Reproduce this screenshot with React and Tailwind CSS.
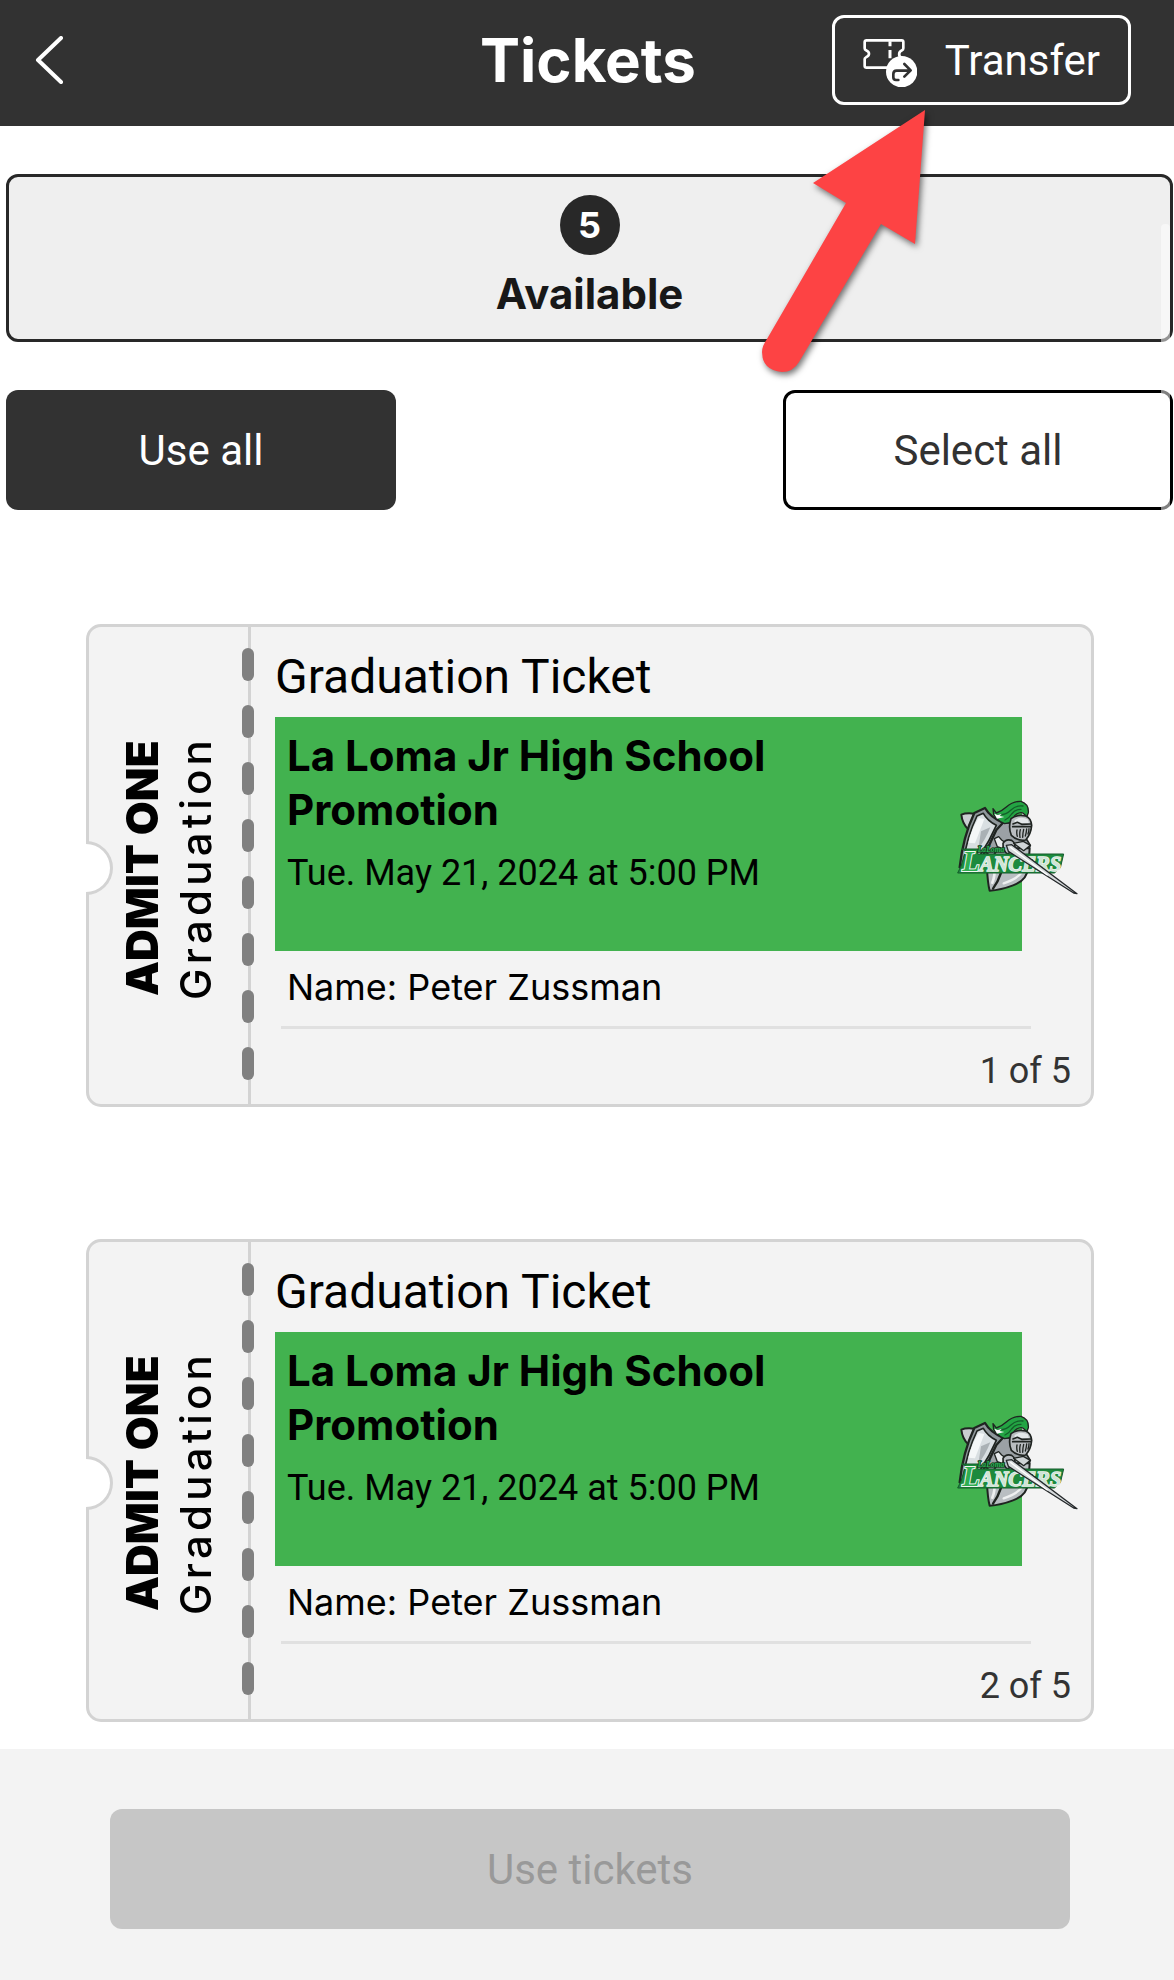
import React from 'react';

const tickets = [
  { id: 1, type: 'Graduation Ticket', event: 'La Loma Jr High School Promotion', date: 'Tue. May 21, 2024 at 5:00 PM', name: 'Peter Zussman' },
  { id: 2, type: 'Graduation Ticket', event: 'La Loma Jr High School Promotion', date: 'Tue. May 21, 2024 at 5:00 PM', name: 'Peter Zussman' },
];
const total = 5;
const dashes = [0, 1, 2, 3, 4, 5, 6, 7];

function TransferIcon(){
  return (
    <svg viewBox="132 69 162 162" className="w-[54px] h-[54px] shrink-0" fill="none" aria-hidden="true">
      <path d="M143 91H248Q253 91 253 96V115Q253 119 249 121C238 126 238 138 247 143L253 147V173H143Q137 173 137 168V147Q137 144 141 142C153 137 153 126 141 121Q137 119 137 115V96Q137 91 143 91Z" stroke="#fff" strokeWidth="8" strokeLinejoin="round" />
      <path d="M213 94V109M213 120V145" stroke="#fff" strokeWidth="9" />
      <circle cx="248" cy="185" r="47" fill="#fff" />
      <path d="M238 210H231Q223 210 223 202V192Q223 182 233 182H273M256 162L275 181L256 200" stroke="#323232" strokeWidth="8" strokeLinecap="round" strokeLinejoin="round" />
    </svg>
  );
}

function LancersLogo(){
  return (
    <svg viewBox="0 0 480 390" className="absolute right-0 top-[153px] w-[160px] h-[130px]" role="img" aria-label="La Loma Lancers">
      <g stroke="#1f2421" strokeLinejoin="round" strokeLinecap="round">
        {/* shoulder and body */}
        <path d="M130 101Q105 98 91 104Q94 132 112 148Z" fill="#c9ced1" strokeWidth="6" />
        <path d="M196 130L246 128L288 180L298 196L284 226L180 232L150 200Z" fill="#9ba1a5" strokeWidth="5" />
        <path d="M168 264Q170 310 176 332Q210 330 246 316Q288 302 292 262L296 205L200 205Z" fill="#b9bec2" strokeWidth="6" />
        <path d="M214 240Q218 280 186 326" fill="none" strokeWidth="7" />
        <path d="M282 258Q274 292 218 310" fill="none" stroke="#eef0f1" strokeWidth="7" />
        <path d="M190 262Q193 286 184 308" fill="none" stroke="#eef0f1" strokeWidth="8" />
        {/* shield */}
        <path d="M86 262Q96 170 130 99L162 84Q178 112 216 128L196 150Q178 194 150 236L100 250Z" fill="#8f979b" strokeWidth="7" />
        <path d="M99 238Q108 170 138 108L157 100Q169 122 196 136Q176 182 148 224Z" fill="#d9dfe2" strokeWidth="5" />
        <path d="M112 188Q122 146 143 114L160 117Q148 149 132 190Z" fill="#f4f7f8" stroke="none" />
        <path d="M150 154L178 142Q164 178 142 206Z" fill="#aab1b5" stroke="none" />
        {/* plume */}
        <path d="M186 86L196 99Q212 94 225 82Q246 63 270 64Q294 72 292 98L287 112Q277 90 257 102Q246 109 240 127L221 131Q200 123 188 104Z" fill="#23a443" strokeWidth="4" />
        <path d="M202 104Q224 106 240 90Q256 75 276 78M222 120Q234 115 242 102Q252 88 270 88" fill="none" stroke="#145e2a" strokeWidth="4" />
        <path d="M190 101L198 116L220 111L206 108L212 102L199 105Z" fill="#fff" stroke="none" />
        {/* helmet */}
        <path d="M240 116Q258 102 284 108Q300 114 302 136Q300 162 284 180Q260 184 241 166Q231 142 240 116Z" fill="#b9bdc0" strokeWidth="5" />
        <path d="M251 120Q270 108 290 118L294 130H250Z" fill="#e3e7e9" stroke="none" />
        <path d="M246 132L259 127L272 133L299 132M245 140H299" fill="none" strokeWidth="5" />
        <path d="M258 150Q256 159 259 169M268 149Q265 160 267 172M278 148Q275 160 275 172M287 147Q286 158 283 168M294 146Q294 153 291 162" fill="none" strokeWidth="4" />
        {/* gauntlet */}
        <path d="M190 176L203 170L212 180L222 187L215 206L199 200Z" fill="#e9eced" strokeWidth="4" />
        <path d="M216 190Q224 176 242 181Q256 190 250 208L230 222Q215 214 216 190Z" fill="#b9bec2" strokeWidth="5" />
        <path d="M248 190L277 184L298 196L278 212Z" fill="#d0d5d7" strokeWidth="4" />
      </g>
      <path d="M93 207H142L140 222H398L388 264L370 279H80L90 258L104 212Z" fill="#1c8a3d" stroke="#155a2b" strokeWidth="3" />
      <g fontFamily="'Liberation Serif', serif" fontWeight="700" fontStyle="italic">
        <text x="140" y="217" fontSize="23" fill="#2fb457" stroke="#123d20" strokeWidth="5" paintOrder="stroke">LaLoma</text>
        <text x="94" y="273" fontSize="86" fill="#2fae52" stroke="#f1f5f2" strokeWidth="6" paintOrder="stroke">L</text>
        <text x="146" y="273" fontSize="62" fill="#cfe5d5" stroke="#f1f5f2" strokeWidth="4" paintOrder="stroke">ANCERS</text>
      </g>
      {/* lance */}
      <path d="M226 196L242 194L438 341L428 339L232 214Z" fill="#d6dadc" stroke="#24282a" strokeWidth="4" strokeLinejoin="round" />
      <path d="M238 202L350 286" stroke="#fff" strokeWidth="4" />
    </svg>
  );
}

function Ticket({ ticket }){
  return (
    <article className="relative flex rounded-[15px] border-[3px] border-[#d3d3d3] bg-[#f3f3f3] text-black">
      <div className="relative flex w-[162px] shrink-0 items-center justify-center border-r-[3px] border-[#d3d3d3] pt-1">
        <div className="rotate-180 text-center font-['Inter'] leading-[54px] [writing-mode:vertical-rl]">
          <p className="text-[44px] font-black">ADMIT ONE</p>
          <p className="text-[42px] font-medium tracking-widest">Graduation</p>
        </div>
        <div className="absolute top-[21px] -right-[6px] flex flex-col gap-6">
          {dashes.map((d) => <span key={d} className="h-[33px] w-3 rounded-full bg-[#808080]" />)}
        </div>
      </div>
      {/* punched edge */}
      <span className="absolute top-[214px] -left-[3px] h-[54px] w-[27px] rounded-r-full border-[3px] border-l-0 border-[#d3d3d3] bg-white" />

      <div className="relative min-w-0 flex-1 pt-[22px] pb-[9px] pl-6">
        <h2 className="text-[48px] leading-[56px]">{ticket.type}</h2>
        <div className="mt-3 mr-[69px] bg-[#42b24f] px-3 pt-3 pb-[54px]">
          <h3 className="max-w-[560px] font-['Inter'] text-[42px] leading-[54px] font-bold">{ticket.event}</h3>
          <p className="mt-3 text-[36px] leading-[48px]">{ticket.date}</p>
        </div>
        <p className="mt-3 pl-3 font-['Inter'] text-[36px] leading-[48px]">Name: {ticket.name}</p>
        <hr className="mt-[15px] mr-[60px] ml-[6px] border-t-[3px] border-[#e0e0e0]" />
        <p className="mt-[18px] pr-5 text-right text-[36px] leading-[48px] text-[#333]">{ticket.id} of {total}</p>
        <LancersLogo />
      </div>
    </article>
  );
}

export default function App(){
  return (
    <div className="relative min-h-screen overflow-x-hidden bg-white font-['Roboto',sans-serif]">
      <header className="grid grid-cols-[1fr_auto_1fr] items-center bg-[#323232] pt-[15px] pb-[21px] pl-[2px] text-white">
        <button type="button" aria-label="Back" className="ml-8 justify-self-start">
          <svg viewBox="0 0 30 48" className="h-12 w-[30px]" fill="none" stroke="#fff" strokeWidth="4" strokeLinecap="round" strokeLinejoin="round" aria-hidden="true">
            <path d="M27 2L4 24L27 46" />
          </svg>
        </button>
        <h1 className="font-['Inter'] text-[60px] leading-[72px] font-bold">Tickets</h1>
        <button type="button" className="mr-[43px] flex h-[90px] items-center gap-7 justify-self-end rounded-xl border-[3px] border-white px-7 text-[42px] leading-[48px]">
          <TransferIcon />
          <span className="pt-[2px]">Transfer</span>
        </button>
      </header>

      <main>
        <section className="pt-12 pr-px pl-[6px]">
          <button type="button" className="flex w-full flex-col items-center rounded-xl border-[3px] border-[#282828] bg-[#efefef] pt-[18px] pb-[21px] font-['Inter'] font-bold">
            <span className="flex h-[60px] w-[60px] items-center justify-center rounded-full bg-[#282828] text-[36px] leading-[48px] text-white">{total}</span>
            <span className="mt-[15px] text-[42px] leading-[48px] text-[#181818]">Available</span>
          </button>
          <div className="mt-12 flex justify-between">
            <button type="button" className="h-[120px] w-[390px] rounded-xl bg-[#323232] pt-[2px] text-[42px] leading-[48px] text-white">Use all</button>
            <button type="button" className="h-[120px] w-[390px] rounded-xl border-[3px] border-black bg-white pt-[2px] text-[42px] leading-[48px] text-[#323232]">Select all</button>
          </div>
        </section>

        <section className="flex flex-col gap-[132px] pt-[114px] pr-[80px] pb-[27px] pl-[86px]">
          {tickets.map((t) => <Ticket key={t.id} ticket={t} />)}
        </section>
      </main>

      <footer className="bg-[#f3f3f3] pt-[60px] pr-[104px] pb-[51px] pl-[110px]">
        <button type="button" disabled className="h-[120px] w-full rounded-xl bg-[#c6c6c6] pt-[2px] text-[42px] leading-[48px] text-[#999]">Use tickets</button>
      </footer>

      {/* scroll thumb */}
      <div className="pointer-events-none absolute top-[224px] right-[4px] h-[400px] w-[9px] rounded-t-sm bg-white/50" />

      {/* callout arrow pointing at Transfer */}
      <svg viewBox="750 100 190 290" className="pointer-events-none absolute top-[100px] right-[234px] w-[190px] h-[290px] drop-shadow-[2px_3px_3px_rgba(0,0,0,0.55)]" aria-hidden="true">
        <path d="M925 110L915 244L881 224L799 362Q793 372 782 372Q762 370 762 352Q762 346 767 339L846 203L813 183Z" fill="#fd4344" />
      </svg>
    </div>
  );
}
